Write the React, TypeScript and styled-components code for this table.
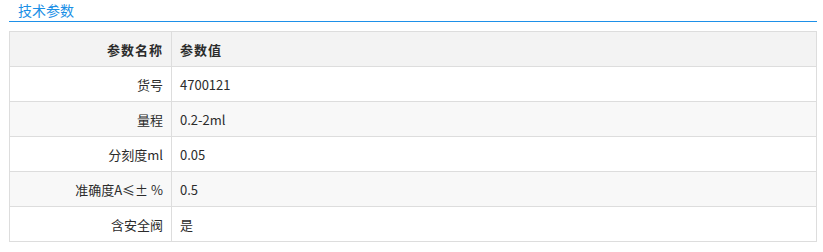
import React, { FC } from "react";
import styled, { createGlobalStyle } from "styled-components";

const GlobalStyle = createGlobalStyle`
  body {
    margin: 0;
    background: #fff;
    font-family: "Noto Sans CJK SC", "Liberation Sans", sans-serif;
    color: #333;
  }
`;

const Wrap = styled.div`
  width: 808px;
  margin-left: 9px;
`;

const Title = styled.div`
  height: 21px;
  line-height: 20px;
  padding-left: 9px;
  font-size: 14px;
  color: #1a8fe6;
  border-bottom: 1px solid #1e90e8;
`;

const Table = styled.table`
  margin-top: 9px;
  width: 100%;
  border-collapse: collapse;
  border: 1px solid #ddd;
  font-size: 13px;
`;

const Row = styled.tr<{ striped?: boolean }>`
  background: ${({ striped }) => (striped ? "#f8f8f8" : "#fff")};
`;

const HeadRow = styled.tr`
  background: #f3f3f3;
`;

const Cell = styled.td<{ label?: boolean; head?: boolean }>`
  height: 34px;
  padding: 0 8px;
  border: 1px solid #ddd;
  text-align: ${({ label }) => (label ? "right" : "left")};
  width: ${({ label }) => (label ? "145px" : "auto")};
  font-weight: ${({ head }) => (head ? 700 : 400)};
  color: #2b2b2b;
  letter-spacing: ${({ head }) => (head ? "1px" : "0")};
`;

const params = [
  { name: "货号", value: "4700121" },
  { name: "量程", value: "0.2-2ml" },
  { name: "分刻度ml", value: "0.05" },
  { name: "准确度A≤± %", value: "0.5" },
  { name: "含安全阀", value: "是" },
];

const App: FC = () => (
  <>
    <GlobalStyle />
    <Wrap>
      <Title>技术参数</Title>
      <Table>
        <tbody>
          <HeadRow>
            <Cell label head>
              参数名称
            </Cell>
            <Cell head>参数值</Cell>
          </HeadRow>
          {params.map(({ name, value }, index) => (
            <Row key={index} striped={index % 2 === 1}>
              <Cell label>{name}</Cell>
              <Cell>{value}</Cell>
            </Row>
          ))}
        </tbody>
      </Table>
    </Wrap>
  </>
);

export default App;
